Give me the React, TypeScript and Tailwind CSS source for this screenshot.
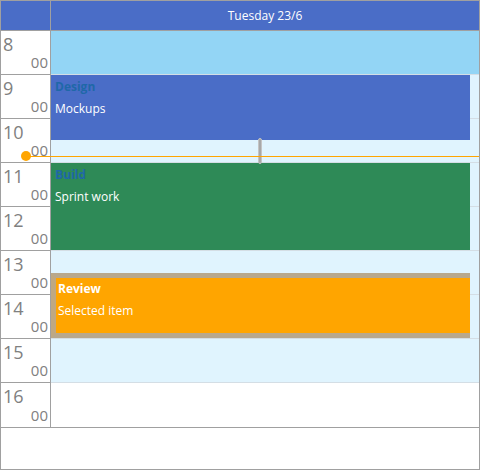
import { FC } from "react";

interface CalendarEvent {
  title: string;
  note: string;
  top: string;
  height: string;
  className: string;
  titleClass: string;
}

const hours = [8, 9, 10, 11, 12, 13, 14, 15, 16];

// background per hour slot: 8 is the picked slot, 9-15 is working time
const slotBg = (h: number) => {
  if (h === 8) return "bg-[#93d5f5]";
  if (h >= 9 && h <= 15) return "bg-[#e0f4fe]";
  return "bg-white";
};

const events: CalendarEvent[] = [
  {
    title: "Design",
    note: "Mockups",
    top: "top-[44px]",
    height: "h-[65px]",
    className: "bg-[#4a6dc7] pl-[4px] pt-[4px]",
    titleClass: "text-[#1f68a8]",
  },
  {
    title: "Build",
    note: "Sprint work",
    top: "top-[132px]",
    height: "h-[87px]",
    className: "bg-[#2e8a57] pl-[4px] pt-[4px]",
    titleClass: "text-[#1f68a8]",
  },
  {
    title: "Review",
    note: "Selected item",
    top: "top-[242px]",
    height: "h-[65px]",
    className:
      "bg-[#ffa500] border-l-5 border-t-5 border-b-5 border-l-[#bfa882] border-t-[#b8a88c] border-b-[#b8a88c] pl-[2px] pt-[3px]",
    titleClass: "text-white",
  },
];

const TimeCell: FC<{ hour: number; last: boolean }> = ({ hour, last }) => (
  <div
    className={`flex h-[44px] flex-col justify-between pl-[2px] pr-[2px] pt-[4px] pb-[4px] text-[#808080] ${
      last ? "h-[43px]" : "border-b border-[#a0a0a0]"
    }`}
  >
    <span className="text-[18px] leading-none">{hour}</span>
    <span className="self-end text-[15px] leading-none">00</span>
  </div>
);

const App: FC = () => {
  return (
    <div
      className="flex h-[470px] w-[480px] flex-col border border-[#a0a0a0] bg-white"
      style={{ fontFamily: '"Open Sans", "Noto Sans", sans-serif' }}
    >
      {/* header */}
      <div className="flex h-[30px] shrink-0 border-b border-[#a0a0a0] bg-[#4a6dc7]">
        <div className="w-[50px] border-r border-[#a0a0a0]" />
        <div className="flex flex-1 items-center justify-center text-[12px] text-white">
          Tuesday 23/6
        </div>
      </div>

      {/* day grid */}
      <div className="relative flex shrink-0 border-b border-[#a0a0a0]">
        <div className="w-[50px] border-r border-[#a0a0a0]">
          {hours.map((h, i) => (
            <TimeCell key={h} hour={h} last={i === hours.length - 1} />
          ))}
        </div>

        <div className="relative flex-1">
          {hours.map((h, i) => (
            <div
              key={h}
              className={`${slotBg(h)} ${
                i === hours.length - 1 ? "h-[43px]" : "h-[44px] border-b border-[#d4dee5]"
              }`}
            />
          ))}

          {events.map((ev) => (
            <div
              key={ev.title}
              className={`absolute left-0 right-[9px] ${ev.top} ${ev.height} ${ev.className}`}
            >
              <div className={`text-[12px] font-bold leading-[16px] ${ev.titleClass}`}>{ev.title}</div>
              <div className="mt-[6px] text-[12px] leading-[16px] text-white">{ev.note}</div>
            </div>
          ))}

          {/* resize grip */}
          <div className="absolute left-[207px] top-[107px] h-[26px] w-[4px] rounded-full border border-[#c4c4c4] bg-[#a8a8a8]" />
        </div>

        {/* now indicator */}
        <div className="absolute left-[25px] right-0 top-[125px] h-px bg-[#ffa500]" />
        <div className="absolute left-[20px] top-[120px] h-[10px] w-[10px] rounded-full bg-[#ffa500]" />
      </div>

      <div className="flex-1" />
    </div>
  );
};

export default App;
